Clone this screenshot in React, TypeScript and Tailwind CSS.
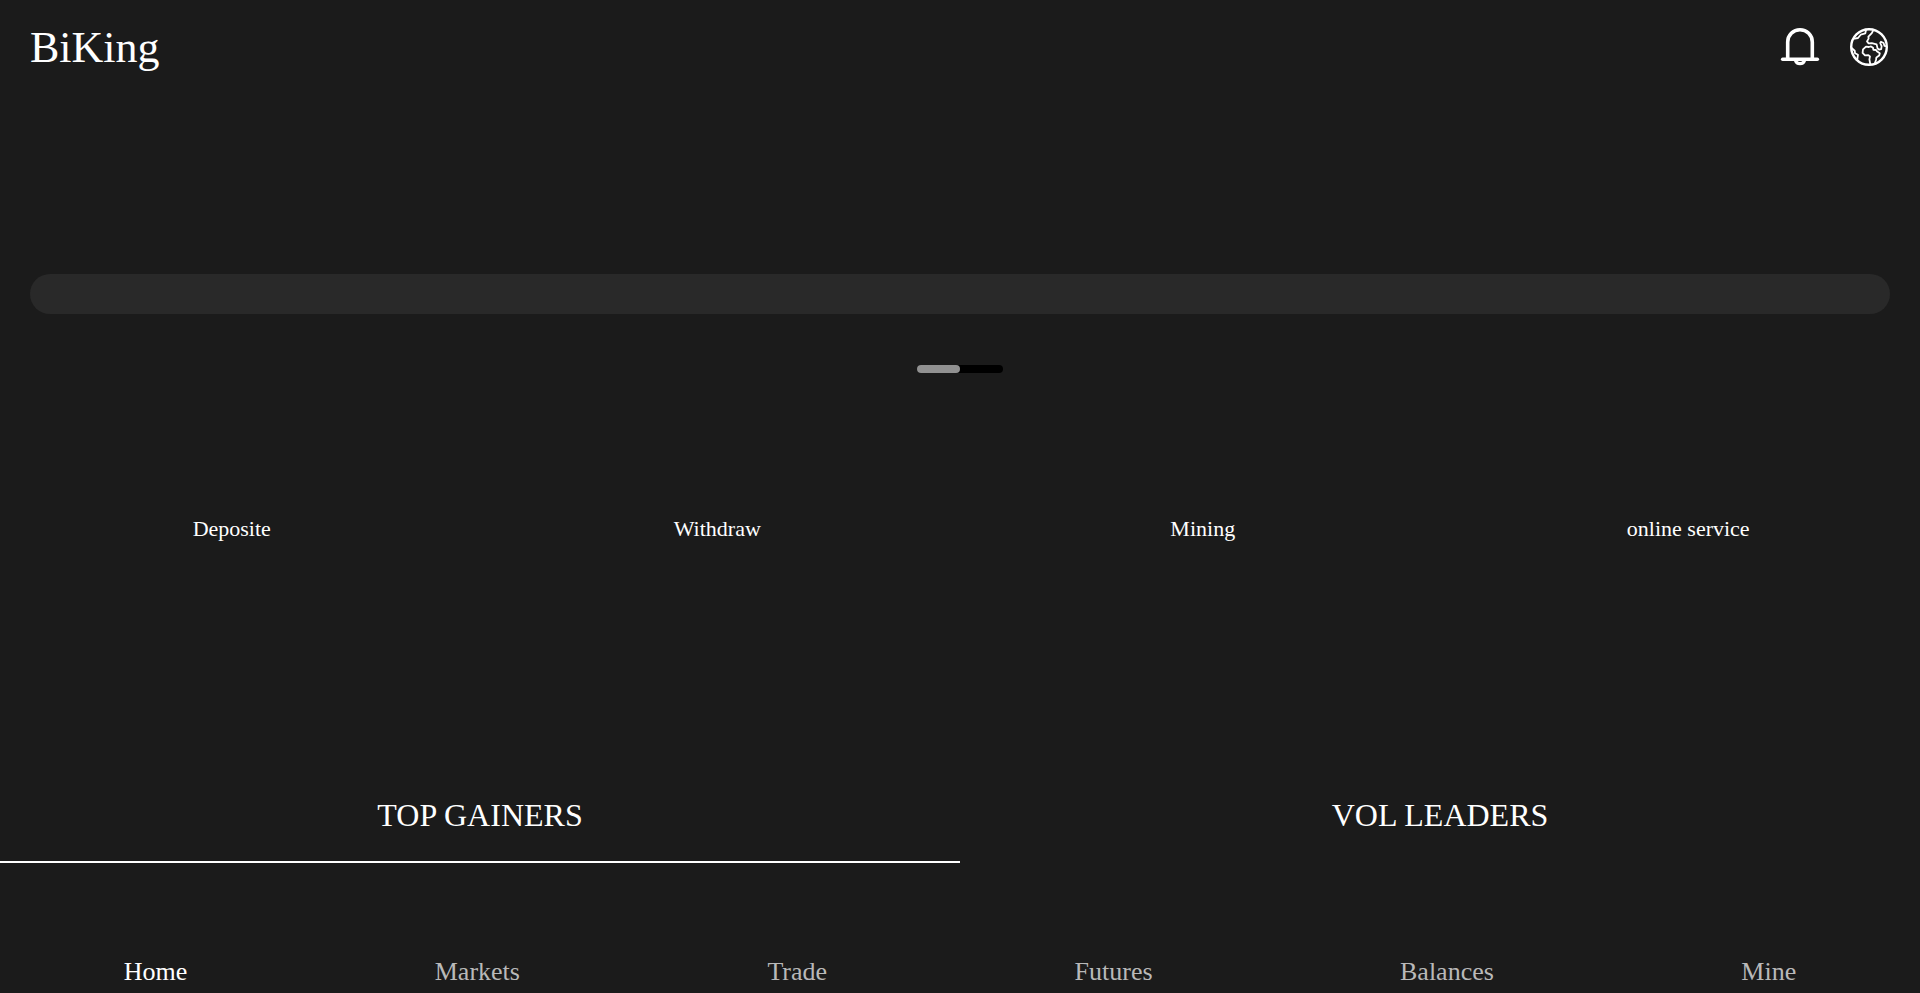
interface Shortcut {
  label: string;
  href: string;
}

const shortcuts: Shortcut[] = [
  { label: 'Deposite', href: '#deposit' },
  { label: 'Withdraw', href: '#withdraw' },
  { label: 'Mining', href: '#mining' },
  { label: 'online service', href: '#service' },
];

const navItems = ['Home', 'Markets', 'Trade', 'Futures', 'Balances', 'Mine'];

function BellIcon() {
  return (
    <svg viewBox="0 0 40 40" className="w-10 h-10" fill="none" stroke="white" strokeLinecap="round" aria-hidden="true">
      <path d="M7.7 32V15a12.3 12.3 0 0 1 24.6 0V32" strokeWidth="3.6" />
      <path d="M2.6 32.2h34.8" strokeWidth="3.4" />
      <path d="M15.4 33.2a4.8 4.8 0 0 0 9.2 0" strokeWidth="3.2" />
    </svg>
  );
}

function GlobeIcon() {
  return (
    <svg viewBox="0 0 40 40" className="w-10 h-10" fill="none" stroke="white" strokeWidth="1.8" strokeLinejoin="round" strokeLinecap="round" aria-hidden="true">
      <circle cx="20" cy="20" r="17.8" strokeWidth="2.4" />
      <path d="M17 3l-.7 3.3-4.6 1.4L9 11l-3.3.7" />
      <path d="M24.2 3.4l-1.4 2.8-3.4 3.4.2 2-1.6 2.8 1.6 2 3.2-.2 4.8 1.2 1 4.2 1.4 1 2.2-.4.4-3-1.4-3.2.8-1.2 2.6 1.2.8 2.8 1.8.4" />
      <path d="M2.6 21l3.1 2.7.4 2.6 2.9 1.4-.7 4.6" />
      <path d="M21.2 36.8l-.8-4.4.6-3-1.6-1.2-3.4.2-2.4-2.6.4-3.4 3-2.8 2.8.4 2.2-.6 2 1.4.4 2 2.6.2 1.2 1.6 2.6 1.6-.6 2.4-2.8 1.8-.4 2.6-1.2 3.6" />
    </svg>
  );
}

export default function App() {
  return (
    <div className="min-h-screen flex flex-col bg-[#1b1b1b] text-white font-['Liberation_Serif',serif]">
      <header className="flex items-end justify-between pl-[30px] pr-[31px] pt-[22px]">
        <h1 className="text-[44px] leading-[52px]">BiKing</h1>
        <div className="flex items-center gap-[29px] pb-[7px]">
          <button type="button" aria-label="Notifications" className="cursor-pointer">
            <BellIcon />
          </button>
          <button type="button" aria-label="Language" className="cursor-pointer">
            <GlobeIcon />
          </button>
        </div>
      </header>

      <main className="flex-1">
        {/* Notice bar */}
        <div className="mx-[30px] mt-[200px] h-10 rounded-full bg-[#292929]"></div>

        {/* Carousel indicator */}
        <div className="mx-auto mt-[51px] w-[86px] h-2 rounded bg-black">
          <div className="w-1/2 h-full rounded bg-[#919191]"></div>
        </div>

        <div className="grid grid-cols-4 gap-[82px] px-[30px] mt-[142px] text-center text-[22px] leading-7">
          {shortcuts.map((item) => (
            <a key={item.label} href={item.href}>
              {item.label}
            </a>
          ))}
        </div>

        {/* Ranking tabs */}
        <div role="tablist" className="grid grid-cols-2 mt-[224px] text-[32px] leading-10">
          <button type="button" role="tab" aria-selected="true" className="pt-[28px] pb-[26px] border-b-2 border-white cursor-pointer">
            TOP GAINERS
          </button>
          <button type="button" role="tab" aria-selected="false" className="pt-[28px] pb-[26px] border-b-2 border-transparent cursor-pointer">
            VOL LEADERS
          </button>
        </div>
      </main>

      <nav className="flex justify-around pb-[5px] text-[26px] leading-8 text-[#b9b9b9]">
        {navItems.map((item, i) => (
          <a key={item} href={`#${item.toLowerCase()}`} className={i === 0 ? 'text-white' : ''}>
            {item}
          </a>
        ))}
      </nav>
    </div>
  );
}
